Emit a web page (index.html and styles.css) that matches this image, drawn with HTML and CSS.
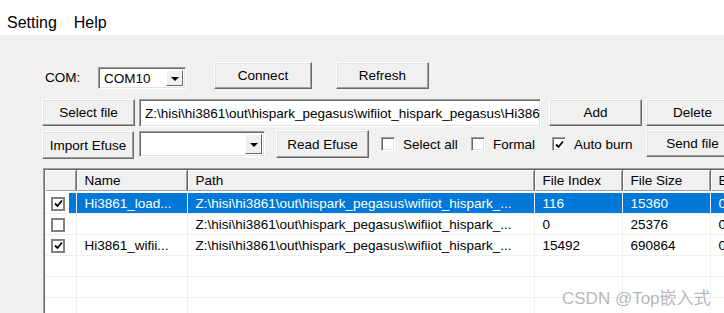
FILE: index.html
```html
<!DOCTYPE html>
<html lang="en">
<head>
    <meta charset="UTF-8">
    <meta name="viewport" content="width=device-width, initial-scale=1.0">
    <title>HiBurn</title>
    <link rel="stylesheet" href="styles.css">
</head>
<body>
    <div class="menubar">
        <span class="menu-item">Setting</span>
        <span class="menu-item">Help</span>
    </div>
    <div class="client">
        <div class="row row-com">
            <span class="com-label">COM:</span>
            <div class="combo combo-com">
                <span class="combo-text">COM10</span>
                <span class="combo-btn"><i class="arrow"></i></span>
            </div>
            <button class="btn btn-connect">Connect</button>
            <button class="btn btn-refresh">Refresh</button>
        </div>
        <div class="row row-file">
            <button class="btn btn-std">Select file</button>
            <div class="textbox path-box">Z:\hisi\hi3861\out\hispark_pegasus\wifiiot_hispark_pegasus\Hi386</div>
            <button class="btn btn-std btn-add">Add</button>
            <button class="btn btn-std">Delete</button>
        </div>
        <div class="row row-efuse">
            <button class="btn btn-import">Import Efuse</button>
            <div class="combo combo-efuse">
                <span class="combo-text"></span>
                <span class="combo-btn"><i class="arrow"></i></span>
            </div>
            <button class="btn btn-std btn-read">Read Efuse</button>
            <label class="check check-all"><span class="box"></span>Select all</label>
            <label class="check check-formal"><span class="box"></span>Formal</label>
            <label class="check check-auto"><span class="box checked"><svg viewBox="0 0 9 9" width="9" height="9"><path d="M1 4.5 L3.5 7 L8 1.5" fill="none" stroke="#000" stroke-width="1.8"/></svg></span>Auto burn</label>
            <button class="btn btn-std">Send file</button>
        </div>
        <div class="list">
            <table class="list-table">
                <colgroup>
                    <col class="c-check">
                    <col class="c-name">
                    <col class="c-path">
                    <col class="c-index">
                    <col class="c-size">
                    <col class="c-b">
                </colgroup>
                <thead>
                    <tr>
                        <th></th>
                        <th>Name</th>
                        <th>Path</th>
                        <th>File Index</th>
                        <th>File Size</th>
                        <th>B</th>
                    </tr>
                </thead>
                <tbody>
                    <tr class="selected">
                        <td class="cell-check"><span class="box checked"><svg viewBox="0 0 9 9" width="9" height="9"><path d="M1 4.5 L3.5 7 L8 1.5" fill="none" stroke="#000" stroke-width="1.8"/></svg></span></td>
                        <td>Hi3861_load...</td>
                        <td>Z:\hisi\hi3861\out\hispark_pegasus\wifiiot_hispark_...</td>
                        <td>116</td>
                        <td>15360</td>
                        <td>0</td>
                    </tr>
                    <tr>
                        <td class="cell-check"><span class="box"></span></td>
                        <td></td>
                        <td>Z:\hisi\hi3861\out\hispark_pegasus\wifiiot_hispark_...</td>
                        <td>0</td>
                        <td>25376</td>
                        <td>0</td>
                    </tr>
                    <tr>
                        <td class="cell-check"><span class="box checked"><svg viewBox="0 0 9 9" width="9" height="9"><path d="M1 4.5 L3.5 7 L8 1.5" fill="none" stroke="#000" stroke-width="1.8"/></svg></span></td>
                        <td>Hi3861_wifii...</td>
                        <td>Z:\hisi\hi3861\out\hispark_pegasus\wifiiot_hispark_...</td>
                        <td>15492</td>
                        <td>690864</td>
                        <td>0</td>
                    </tr>
                    <tr><td></td><td></td><td></td><td></td><td></td><td></td></tr>
                    <tr><td></td><td></td><td></td><td></td><td></td><td></td></tr>
                    <tr><td></td><td></td><td></td><td></td><td></td><td></td></tr>
                </tbody>
            </table>
        </div>
    </div>
    <div class="watermark">CSDN @Top嵌入式</div>
</body>
</html>
```

FILE: styles.css
```css
html, body {
    margin: 0;
    width: 724px;
    height: 313px;
    overflow: hidden;
}
body {
    font-family: "Liberation Sans", Arial, sans-serif;
    font-size: 13.5px;
    color: #000;
    background: #f0f0f0;
    position: relative;
}
.menubar {
    height: 35px;
    background: #fff;
    box-sizing: border-box;
    padding: 13px 0 0 7px;
    font-size: 16px;
    line-height: 20px;
    display: flex;
    gap: 17px;
}
.client {
    padding: 27px 0 0 42px;
}
.row {
    display: flex;
    align-items: flex-start;
    white-space: nowrap;
}
.row-com {
    height: 27px;
}
.row-file {
    margin-top: 10px;
    height: 28px;
}
.row-efuse {
    margin-top: 3px;
    height: 28px;
}

/* classic 3d button */
.btn {
    box-sizing: border-box;
    height: 27px;
    padding: 0;
    font: inherit;
    color: #000;
    background: #f0f0f0;
    border: 1px solid;
    border-color: #fff #696969 #696969 #fff;
    box-shadow: inset -1px -1px #a0a0a0, inset 1px 1px #e3e3e3;
    flex: none;
}
.btn-std {
    width: 93px;
    margin-right: 4px;
}
.btn-connect {
    width: 98px;
    margin-left: 28px;
}
.btn-refresh {
    width: 93px;
    margin-left: 24px;
}
.btn-add {
    margin-left: 8px;
}
.btn-import {
    width: 92px;
    height: 28px;
    margin-top: 1px;
    margin-right: 5px;
}
.btn-read {
    height: 28px;
    margin-left: 11px;
    margin-right: 12px;
}

.com-label {
    width: 53px;
    margin-left: 3px;
    padding-top: 8px;
}

/* sunken fields */
.textbox, .combo {
    box-sizing: border-box;
    background: #fff;
    border: 1px solid;
    border-color: #a0a0a0 #fff #fff #a0a0a0;
    box-shadow: inset 1px 1px #696969, inset -1px -1px #e3e3e3;
    flex: none;
}
.textbox {
    width: 402px;
    height: 28px;
    padding: 6px 0 0 5px;
    overflow: hidden;
    white-space: nowrap;
}
.combo {
    display: flex;
    align-items: stretch;
    padding: 2px;
}
.combo-com {
    width: 88px;
    height: 22px;
    margin-top: 5px;
}
.combo-efuse {
    width: 126px;
    height: 26px;
    margin-top: 1px;
}
.combo-text {
    flex: 1;
    padding: 1px 0 0 3px;
    line-height: 16px;
}
.combo-btn {
    width: 17px;
    box-sizing: border-box;
    background: #f0f0f0;
    border: 1px solid;
    border-color: #fff #696969 #696969 #fff;
    display: flex;
    align-items: center;
    justify-content: center;
}
.arrow {
    width: 0;
    height: 0;
    border-left: 4px solid transparent;
    border-right: 4px solid transparent;
    border-top: 4px solid #000;
    margin-top: 1px;
}

/* check boxes */
.check {
    display: flex;
    align-items: center;
    height: 28px;
    flex: none;
}
.check-all {
    width: 90px;
}
.check-formal {
    width: 81px;
}
.check-auto {
    width: 94px;
}
.box {
    box-sizing: border-box;
    width: 14px;
    height: 14px;
    background: #fff;
    border: 1px solid;
    border-color: #a0a0a0 #fff #fff #a0a0a0;
    box-shadow: inset 1px 1px #696969, inset -1px -1px #e3e3e3;
    display: inline-flex;
    align-items: center;
    justify-content: center;
    margin-right: 8px;
    flex: none;
}

/* list view */
.list {
    margin-top: 10px;
    margin-left: 1px;
    border: 1px solid;
    border-color: #a0a0a0 #fff #fff #a0a0a0;
    box-shadow: inset 1px 1px #696969;
    padding: 1px 0 0 1px;
    width: 679px;
    height: 160px;
    background: #fff;
    overflow: hidden;
}
.list-table {
    table-layout: fixed;
    border-collapse: collapse;
    width: 728px;
}
.c-check { width: 31px; }
.c-name { width: 111px; }
.c-path { width: 347px; }
.c-index { width: 88px; }
.c-size { width: 88px; }
.c-b { width: 63px; }
.list-table th {
    height: 21px;
    padding: 0 0 0 8px;
    font-weight: normal;
    text-align: left;
    background: #f0f0f0;
    border-right: 1px solid #696969;
    border-bottom: 1px solid #696969;
    box-shadow: inset 1px 1px #fff, inset -1px -1px #a0a0a0;
    white-space: nowrap;
    overflow: hidden;
}
.list-table td {
    height: 20px;
    padding: 0 0 0 8px;
    border-right: 1px solid #f0f0f0;
    border-bottom: 1px solid #f0f0f0;
    white-space: nowrap;
    overflow: hidden;
}
.list-table tbody tr:first-child td {
    border-top: 2px solid #fff;
}
.list-table td.cell-check {
    padding-left: 6px;
}
.cell-check .box {
    width: 14px;
    height: 14px;
    border-color: #808080;
    box-shadow: inset 0 0 0 1px #808080;
    margin: 0;
    vertical-align: middle;
}
.selected td {
    background: #0078d7;
    color: #fff;
}
.selected td.cell-check {
    background: linear-gradient(to right, #fff 24px, #0078d7 24px);
}

.watermark {
    position: absolute;
    left: 562px;
    top: 284px;
    font-family: "Liberation Sans", "Noto Sans CJK SC", sans-serif;
    font-size: 17px;
    color: rgba(120, 120, 120, 0.55);
    white-space: nowrap;
}
```
